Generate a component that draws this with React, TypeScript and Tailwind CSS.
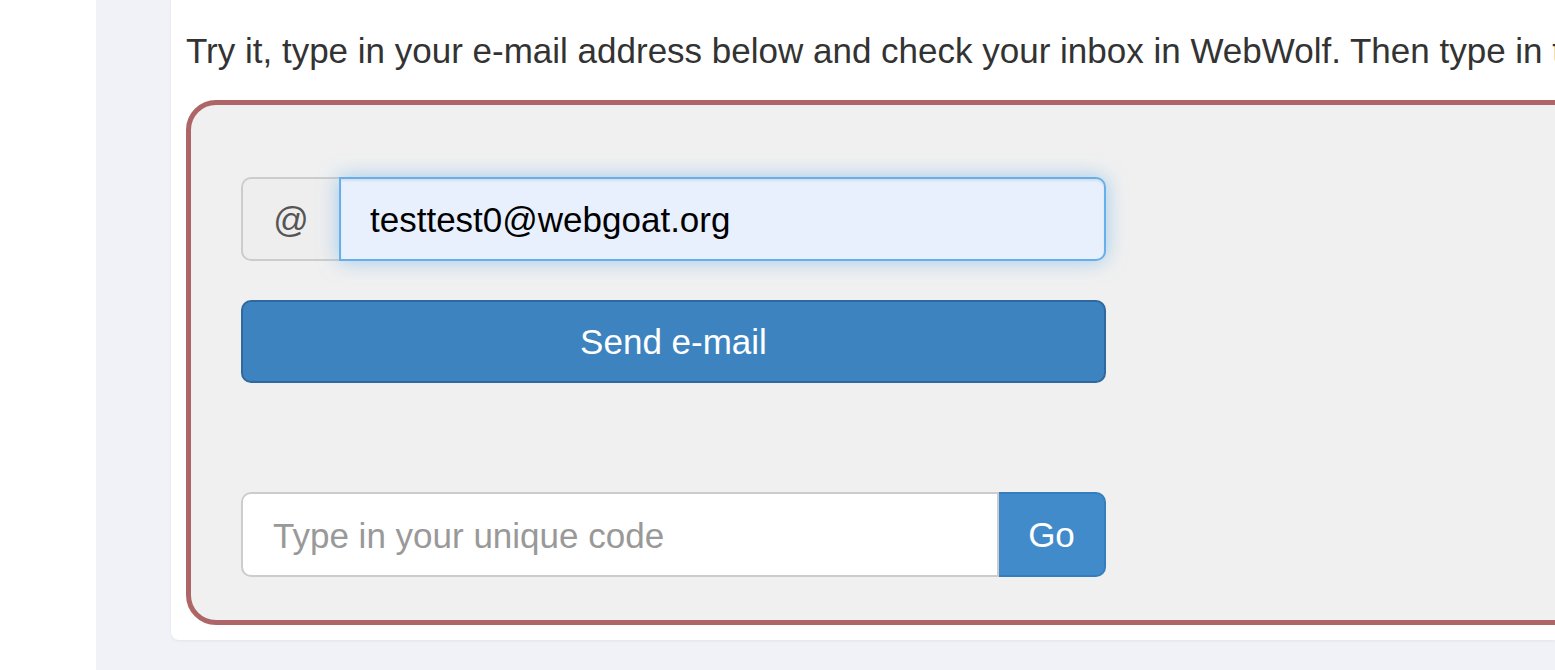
const font = { fontFamily: '"Liberation Sans", Arial, Helvetica, sans-serif' };

const App = () => {
  return (
    <div
      className="flex h-[670px] w-[1555px] overflow-hidden bg-white"
      style={font}
    >
      <div className="w-[96px] shrink-0 bg-white" />
      <main className="flex-1 overflow-hidden bg-[#f0f2f7] pl-[75px]">
        <section className="h-[640px] overflow-hidden rounded-bl-lg bg-white pl-[15px] shadow-[0_1px_3px_rgba(0,0,0,0.06)]">
          <p className="whitespace-nowrap pt-[26px] text-[35px] leading-[50px] text-[#333]">
            Try it, type in your e-mail address below and check your inbox in
            WebWolf. Then type in the unique code from the e-mail in the field
            below.
          </p>
          <div className="mt-[24px] w-[1500px] rounded-[30px] border-[5px] border-[#ae6565] bg-[#f0f0f0] pb-[43px] pl-[50px] pt-[72px]">
            <form className="flex w-[865px] flex-col">
              <div className="flex h-[84px]">
                <span className="flex w-[98px] shrink-0 items-center justify-center rounded-l-[10px] border-2 border-r-0 border-[#ccc] bg-[#eee] pt-[2px] text-[35px] text-[#555]">
                  @
                </span>
                <input
                  type="email"
                  defaultValue="testtest0@webgoat.org"
                  className="flex-1 rounded-r-[10px] border-2 border-[#66afe9] bg-[#e8f0fe] pl-[29px] pt-[3px] text-[35px] text-black shadow-[inset_0_2px_2px_rgba(0,0,0,0.075),0_0_20px_rgba(102,175,233,0.6)] outline-none"
                  style={font}
                />
              </div>
              <button
                type="button"
                className="mt-[39px] h-[83px] rounded-[10px] border-2 border-[#30699d] bg-[#3c83bf] pt-[2px] text-[35px] text-white"
                style={font}
              >
                Send e-mail
              </button>
              <div className="mt-[109px] flex h-[85px]">
                <input
                  type="text"
                  placeholder="Type in your unique code"
                  className="flex-1 rounded-l-[10px] border-2 border-[#ccc] bg-white pl-[30px] pt-[3px] text-[35px] text-[#555] outline-none placeholder:text-[#999]"
                  style={font}
                />
                <button
                  type="button"
                  className="w-[107px] shrink-0 rounded-r-[10px] border-2 border-l-0 border-[#357ebd] bg-[#428bca] pt-[2px] text-[35px] text-white"
                  style={font}
                >
                  Go
                </button>
              </div>
            </form>
          </div>
        </section>
      </main>
    </div>
  );
};

export default App;
